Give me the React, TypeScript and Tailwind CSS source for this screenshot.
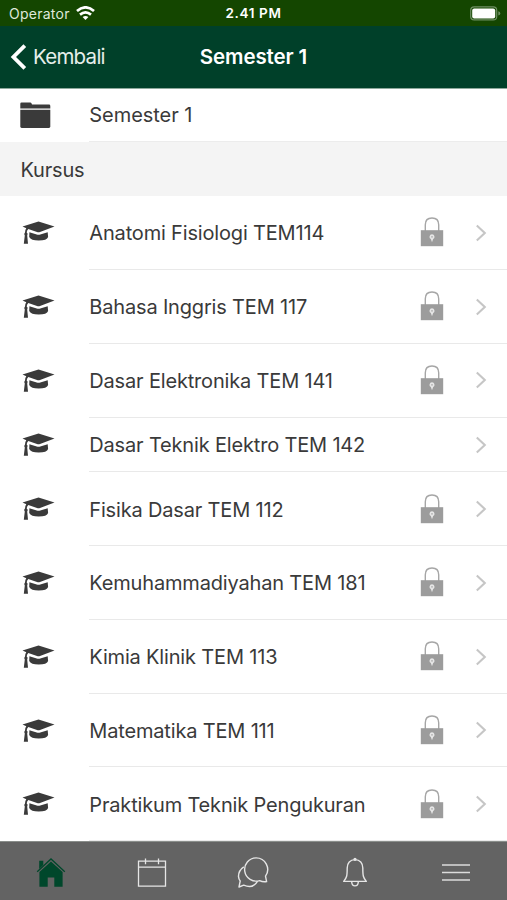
import React, { useState } from 'react';

type Course = { name: string; locked: boolean };

const courses: Course[] = [
  { name: 'Anatomi Fisiologi TEM114', locked: true },
  { name: 'Bahasa Inggris TEM 117', locked: true },
  { name: 'Dasar Elektronika TEM 141', locked: true },
  { name: 'Dasar Teknik Elektro TEM 142', locked: false },
  { name: 'Fisika Dasar TEM 112', locked: true },
  { name: 'Kemuhammadiyahan TEM 181', locked: true },
  { name: 'Kimia Klinik TEM 113', locked: true },
  { name: 'Matematika TEM 111', locked: true },
  { name: 'Praktikum Teknik Pengukuran', locked: true },
];

function FolderIcon() {
  return (
    <svg width="31" height="27" viewBox="0 0 31 27" fill="#3a3a3a">
      <path d="M0.3 6.6V1.8Q0.3 0.6 1.5 0.6H10.2Q11.2 0.6 11.6 1.6L12 2.6H29Q30.3 2.6 30.3 3.9V6.6Z" />
      <path d="M0.3 7.8H30.3V24.6Q30.3 26 28.9 26H1.7Q0.3 26 0.3 24.6Z" />
    </svg>
  );
}

function CapIcon() {
  return (
    <svg width="34" height="24" viewBox="0 0 34 24" fill="#3a3a3a">
      <path d="M16.5 0.6L32.5 5.6L18 10.9Q16.5 11.4 15 10.9L6.3 8Q4.9 9.4 4.7 11.5Q6.4 12.7 5.2 14.5L6 22.8H1.8L2.8 14.6Q1.5 12.8 3 11.5Q3.1 8.8 4.3 7.2L0.5 5.6Z" />
      <path d="M7.4 11.2L14.7 13.6Q16.5 14.1 18.3 13.6L25.7 11.2L26.1 16Q25 19.5 16.7 19.6Q8.9 19.5 7.2 16Z" />
    </svg>
  );
}

function LockIcon() {
  return (
    <svg className="mb-[2px]" width="24" height="30" viewBox="0 0 24 30" fill="none">
      <path d="M5.3 14V7.7Q5.3 1 12 1T18.7 7.7V14" stroke="#a6a6a6" strokeWidth="1.4" />
      <path d="M0.8 13.2H23.2V29.2H0.8Z" fill="#9c9c9c" />
      <path d="M12 17.3A2.5 2.5 0 0 1 13.2 22L12 25.2L10.8 22A2.5 2.5 0 0 1 12 17.3Z" fill="#e6e6e6" />
      <circle cx="12" cy="19.9" r="0.8" fill="#aaa" />
    </svg>
  );
}

function ChevronIcon() {
  return (
    <svg className="mb-px" width="12" height="18" viewBox="0 0 12 18" fill="none">
      <path d="M1.8 1.5L9.8 9L1.8 16.5" stroke="#c6c6c6" strokeWidth="2.1" />
    </svg>
  );
}

const tabs = [
  {
    id: 'home',
    icon: (
      <svg width="30" height="32" viewBox="0 0 30 32" fill="#00472b">
        <path d="M3.2 3.8H7.3V8L3.2 11.9Z" />
        <path d="M1.2 14.8L15 2L28.8 14.8" fill="none" stroke="#00472b" strokeWidth="1.3" />
        <path d="M3.4 15L15 4.6L26.6 15V29.8H18.3V20.4H11.7V29.8H3.4Z" />
      </svg>
    ),
  },
  {
    id: 'calendar',
    icon: (
      <svg width="30" height="32" viewBox="0 0 30 32" fill="none" stroke="#e6e6e6" strokeWidth="1.3">
        <path d="M1.5 4.2H28.5V29.2H1.5ZM1.5 10.2H28.5" />
        <path d="M8.5 1.5V7.2M21.5 1.5V7.2" />
      </svg>
    ),
  },
  {
    id: 'messages',
    icon: (
      <svg width="32" height="32" viewBox="0 0 32 32" fill="none" stroke="#e6e6e6" strokeWidth="1.4" strokeLinejoin="round">
        <path d="M19 0.9A11.6 11.6 0 1 0 22.6 23.6Q25.8 25.2 29.6 24.6L28.5 19.2A11.6 11.6 0 0 0 19 0.9Z" />
        <path d="M6.8 9.8Q1.3 13.6 1.5 19.6Q1.7 22.1 3.2 24L2 30L6.7 28.1Q16 32.2 20.6 24.2" />
      </svg>
    ),
  },
  {
    id: 'notifications',
    icon: (
      <svg width="26" height="32" viewBox="0 0 26 32" fill="none" stroke="#e6e6e6" strokeWidth="1.4" strokeLinejoin="round">
        <path d="M13 2.6C8 2.6 5.2 6 5.2 11C5.2 19 4.8 20.5 1.7 24.4H24.3C21.2 20.5 20.8 19 20.8 11C20.8 6 18 2.6 13 2.6Z" />
        <path d="M9.7 25Q10 28.9 13 28.9T16.3 25" />
        <circle cx="13" cy="2.3" r="0.9" fill="#e6e6e6" />
      </svg>
    ),
  },
  {
    id: 'more',
    icon: (
      <svg width="28" height="32" viewBox="0 0 28 32" fill="none" stroke="#dcdcdc" strokeWidth="1.5">
        <path d="M0 8.1H28M0 15.6H28M0 23.1H28" />
      </svg>
    ),
  },
];

function App() {
  const [activeTab, setActiveTab] = useState('home');

  return (
    <div className="flex h-[900px] w-full flex-col overflow-hidden bg-white font-['Inter',sans-serif] text-[#3a3a3a]">
      {/* Status bar */}
      <div className="grid h-[26px] shrink-0 grid-cols-3 items-center bg-[#144600] px-[9px] text-white">
        <div className="flex items-center gap-[6px]">
          <span className="text-[14px] tracking-[0.25px] text-[#dfe8db]">Operator</span>
          <svg className="mb-px" width="19" height="14" viewBox="0 0 19 14" fill="none" stroke="#fff" strokeWidth="2.7">
            <path d="M1 5Q9.5 -2.3 18 5" />
            <path d="M4 8.6Q9.5 4 15 8.6" />
            <path d="M6.6 11.1Q9.5 8.7 12.4 11.1L9.5 13.9Z" fill="#fff" stroke="none" />
          </svg>
        </div>
        <span className="text-center text-[13.5px] font-semibold tracking-[0.65px]">2.41 PM</span>
        <div className="-mr-[3px] flex justify-end">
          <svg width="31" height="15" viewBox="0 0 31 15">
            <rect x="0.7" y="0.9" width="26" height="13" rx="3.5" fill="none" stroke="#6f8f63" strokeWidth="1.2" />
            <rect x="2.2" y="2.4" width="23" height="10" rx="2" fill="#fff" />
            <path d="M28.3 5.2Q30.3 5.8 30.3 7.4T28.3 9.6Z" fill="#6f8f63" />
          </svg>
        </div>
      </div>

      {/* Header */}
      <header className="grid h-[63px] shrink-0 grid-cols-3 items-center border-b border-[#8da99c] bg-[#004029] px-[10px] text-white">
        <button className="flex items-center gap-[6px] text-left">
          <svg width="17" height="26" viewBox="0 0 17 26" fill="none">
            <path d="M14.8 1.6L3.4 13L14.8 24.4" stroke="#fff" strokeWidth="3.8" />
          </svg>
          <span className="text-[20.5px] tracking-[-0.75px] text-[#e5eeea]">Kembali</span>
        </button>
        <h1 className="text-center text-[20.5px] font-semibold tracking-[-0.1px]">Semester 1</h1>
      </header>

      {/* Category */}
      <div className="flex h-[53.4px] shrink-0 items-center pl-[20px]">
        <div className="w-[69.3px]">
          <FolderIcon />
        </div>
        <div className="flex h-full flex-1 items-center border-b border-[#ececec] text-[20px] tracking-[-0.05px]">
          Semester 1
        </div>
      </div>
      <div className="flex h-[53.9px] shrink-0 items-center bg-[#f4f4f4] pl-[20.5px] pt-px text-[20px] tracking-[-0.2px]">
        Kursus
      </div>

      {/* Courses */}
      <main className="flex min-h-0 flex-1 flex-col">
        {courses.map((course) => (
          <div
            key={course.name}
            className={`flex shrink-0 items-center pl-[22px] ${course.locked ? 'h-[73.75px]' : 'h-[54.9px]'}`}
          >
            <div className="w-[67.3px]">
              <CapIcon />
            </div>
            <div className="flex h-full flex-1 items-center border-b border-[#e9e9e9] pr-[20px] pt-[1.5px]">
              <span className="flex-1 whitespace-nowrap text-[20px] tracking-[-0.17px]">{course.name}</span>
              {course.locked && <LockIcon />}
              <div className="ml-[31px]">
                <ChevronIcon />
              </div>
            </div>
          </div>
        ))}
      </main>

      {/* Tab bar */}
      <nav className="grid h-[59px] shrink-0 grid-cols-5 border-t border-[#8a8e8b] bg-[#636363]">
        {tabs.map((tab) => (
          <button
            key={tab.id}
            aria-label={tab.id}
            aria-pressed={activeTab === tab.id}
            onClick={() => setActiveTab(tab.id)}
            className="flex items-start justify-center pt-[15px]"
          >
            {tab.icon}
          </button>
        ))}
      </nav>
    </div>
  );
}

export default App;
